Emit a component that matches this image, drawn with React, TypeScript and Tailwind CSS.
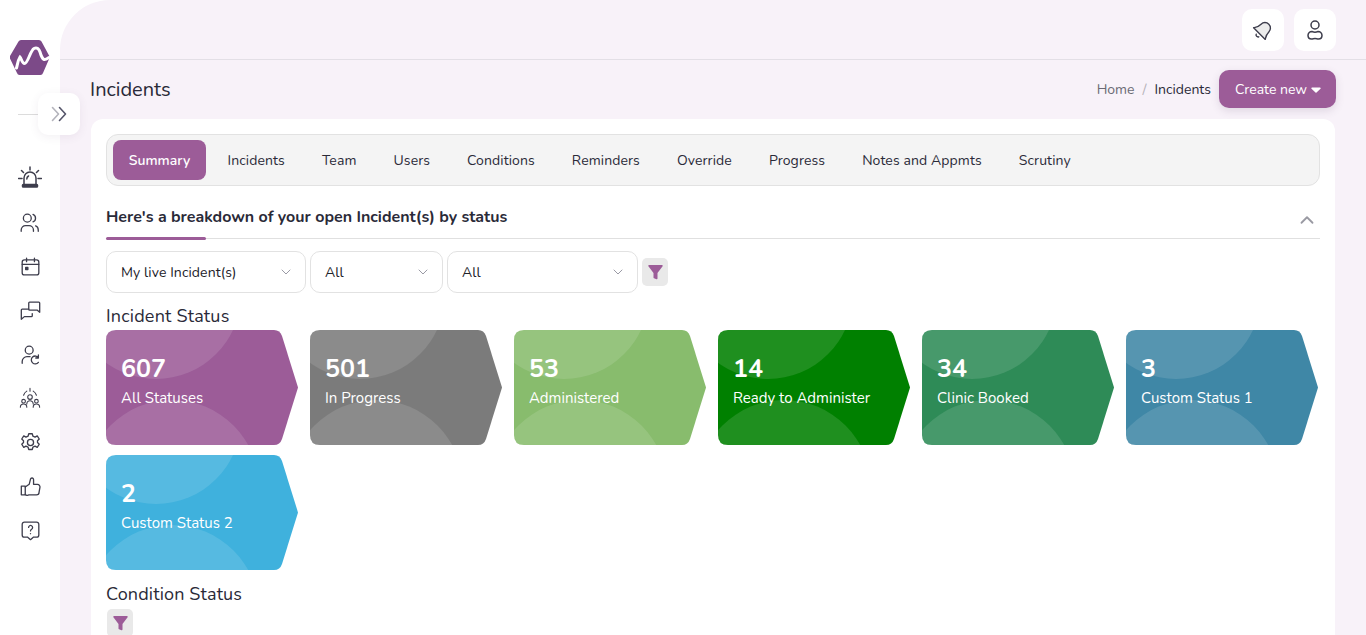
import React from 'react';
import { ChevronDown, ChevronUp } from 'lucide-react';

const tabs = ['Summary', 'Incidents', 'Team', 'Users', 'Conditions', 'Reminders', 'Override', 'Progress', 'Notes and Appmts', 'Scrutiny'];

const statuses = [
  { count: 607, label: 'All Statuses', bg: 'bg-[#9c5c98]' },
  { count: 501, label: 'In Progress', bg: 'bg-[#7b7b7b]' },
  { count: 53, label: 'Administered', bg: 'bg-[#88bc6d]' },
  { count: 14, label: 'Ready to Administer', bg: 'bg-[#008000]' },
  { count: 34, label: 'Clinic Booked', bg: 'bg-[#2e8b57]' },
  { count: 3, label: 'Custom Status 1', bg: 'bg-[#3f87a6]' },
  { count: 2, label: 'Custom Status 2', bg: 'bg-[#3fb1dd]' },
];

function Icon({ children, className = 'w-[21px] h-[21px]' }: { children: React.ReactNode; className?: string }) {
  return (
    <svg viewBox="0 0 24 24" fill="none" stroke="currentColor" strokeWidth="1.5" strokeLinecap="round" strokeLinejoin="round" className={className}>
      {children}
    </svg>
  );
}

const navIcons = [
  // siren
  <Icon key="siren" className="w-[24px] h-[24px]">
    <path d="M6 18v-6a6 6 0 0 1 12 0v6" />
    <rect x="4.500" y="18.500" width="15" height="2.500" rx="0.800" fill="currentColor" />
    <path d="M8.800 13a3.500 3.500 0 0 1 1.700-3M12 1v3M3.500 4.500l2 2M20.500 4.500l-2 2M0.500 12.500h3.500M20 12.500h3.500" />
  </Icon>,
  // people
  <Icon key="people" className="w-[21px] h-[21px] -translate-x-px">
    <circle cx="9.500" cy="7" r="4.500" />
    <path d="M2.500 22v-1.500a5 5 0 0 1 5-5h4a5 5 0 0 1 5 5v1.500" />
    <path d="M16 2.800a4.500 4.500 0 0 1 0 8.400M19 15.800a5 5 0 0 1 3 4.700v1.500" />
  </Icon>,
  // calendar
  <Icon key="calendar">
    <rect x="2.500" y="4.500" width="19" height="17" rx="2.500" />
    <path d="M2.500 9.500h19M7.500 2.500v4M16.500 2.500v4" />
    <rect x="6.500" y="13" width="2.500" height="2.500" fill="currentColor" />
  </Icon>,
  // chat
  <Icon key="chat">
    <path d="M10 3.500a1 1 0 0 1 1-1h10.500a1 1 0 0 1 1 1v10.500l-3-2.500h-8.500a1 1 0 0 1-1-1z" />
    <path d="M10 10.500h-7.500a1 1 0 0 0-1 1v10.500l3.500-3h8a1 1 0 0 0 1-1v-2.500" />
  </Icon>,
  // person with arrow
  <Icon key="person">
    <circle cx="10.500" cy="7" r="4.500" />
    <path d="M2.500 22v-2a5.500 5.500 0 0 1 5.500-5.500h3.500" />
    <path d="M21 15.500a4.500 4.500 0 1 0 0 5.500M21 12.500v3.500h-3" />
  </Icon>,
  // team
  <svg key="team" viewBox="0 0 24 24" fill="none" stroke="currentColor" strokeWidth="1.200" strokeLinecap="round" strokeLinejoin="round" className="w-[22px] h-[22px]">
    <circle cx="12" cy="11" r="2.500" />
    <circle cx="5" cy="15.500" r="2" />
    <circle cx="19" cy="15.500" r="2" />
    <path d="M1.500 22a3.500 3.500 0 0 1 7 0M8.500 18.500a3.500 3.500 0 0 1 7 0M15.500 22a3.500 3.500 0 0 1 7 0" />
    <path d="M12 1.500v3M5 9a8 8 0 0 1 3.500-4.500M19 9a8 8 0 0 0-3.500-4.500" />
  </svg>,
  // gear
  <Icon key="gear">
    <circle cx="12" cy="12" r="3.500" />
    <path d="M10 2h4l.8 2.800 2.400 1 2.500-1.400 2.300 3.600-2 2v2l2 2-2.300 3.600-2.500-1.400-2.400 1-.8 2.800h-4l-.8-2.800-2.400-1-2.500 1.400-2.300-3.600 2-2v-2l-2-2 2.300-3.600 2.500 1.400 2.400-1z" />
  </Icon>,
  // thumbs up
  <Icon key="thumb">
    <path d="M1.500 11.500h4.500v10h-4.500z" />
    <path d="M6 12.500l4.500-3 1.500-6a1.800 1.800 0 0 1 3.500 0.500v5.500h4.500a3 3 0 0 1 2.800 3.500l-1 5.500a3 3 0 0 1-3 3h-8.500a3 3 0 0 1-4.300-.5" />
  </Icon>,
  // question bubble
  <Icon key="help">
    <path d="M5 2.500h14a2.500 2.500 0 0 1 2.500 2.500v12a2.500 2.500 0 0 1-2.500 2.500h-3.500l-3.500 3-3.500-3h-3.500a2.500 2.500 0 0 1-2.500-2.500v-12a2.500 2.500 0 0 1 2.500-2.500z" />
    <path d="M9.800 8.500a2.300 2.300 0 1 1 3.500 2c-.8.500-1.300 1-1.300 2M12 15.500v.1" />
  </Icon>,
];

function FilterButton() {
  return (
    <button className="w-[26px] h-[28px] rounded-[5px] bg-[#e9e9e9] flex items-center justify-center">
      <svg viewBox="0 0 16 16" className="w-[16px] h-[16px] text-[#9c5c98]" fill="currentColor">
        <path d="M1 1h14a.8.8 0 0 1 .6 1.300l-5.100 6.700v5.500a.8.8 0 0 1-1 .7l-2.500-1a.8.8 0 0 1-.5-.7v-4.500l-5.100-6.700a.8.8 0 0 1 .6-1.300z" />
      </svg>
    </button>
  );
}

function FilterSelect({ label, width }: { label: string; width: string }) {
  return (
    <div className={`${width} h-[42px] border border-[#e2e2e2] rounded-[10px] bg-white flex items-center justify-between pl-[14px] pr-[11px] text-[14px] tracking-[0.1px] text-[#212129]`}>
      <span>{label}</span>
      <ChevronDown className="w-[16px] h-[16px] text-[#9a9aa5]" strokeWidth={1.500} />
    </div>
  );
}

function StatusCard({ count, label, bg }: { count: number; label: string; bg: string }) {
  return (
    <div className={`relative w-[192px] h-[115px] overflow-hidden text-white ${bg} [clip-path:path('M10_0H168Q174_0_176_6L192_57.500L176_109Q174_115_168_115H10Q0_115_0_105V10Q0_0_10_0Z')]`}>
      <div className="absolute left-[-35px] top-[-121px] w-[170px] h-[170px] rounded-full bg-white/[0.12]" />
      <div className="absolute left-[-21px] top-[70px] w-[174px] h-[174px] rounded-full bg-white/[0.12]" />
      <div className="relative pl-[15px] pt-[22px]">
        <div className="text-[25px] leading-[34px] font-bold">{count}</div>
        <div className="text-[15px] leading-[20px] mt-[2px]">{label}</div>
      </div>
    </div>
  );
}

export default function App() {
  return (
    <div className="font-['Nunito','Lato','Noto_Sans',sans-serif] flex h-[635px] w-[1366px] overflow-hidden bg-white text-[#2a2a38]">
      {/* 侧边栏 */}
      <aside className="relative z-10 w-[60px] shrink-0 pt-[40px] flex flex-col items-center text-[#3d3d4c]">
        <svg viewBox="0 0 40 35" className="w-[40px] h-[35px]">
          <path d="M11 0h18a3 3 0 0 1 2.500 1.500l7.800 14.500a3 3 0 0 1 0 2.500l-6.300 14.500a3 3 0 0 1-2.500 2h-21a3 3 0 0 1-2.500-2l-7-14.500a3 3 0 0 1 0-2.500l8.500-14.500a3 3 0 0 1 2.500-1.500z" fill="#7c4a88" />
          <path d="M6.500 28c1-3.500 1.500-8 3.500-11 1.500 1.500 2 6.500 4.500 6.500 3.500 0 5.500-12.500 9.500-15 3-1.500 5 .5 6 3.500 1 3.500 2 6.500 4 7.500 1.500.5 3.500-1 5-2" fill="none" stroke="#fff" strokeWidth="3" strokeLinecap="round" />
        </svg>
        <div className="w-[20px] h-px bg-[#dcdcdc] mt-[39px] self-start ml-[18px]" />
        <nav className="mt-[41px] flex flex-col items-center">
          {navIcons.map((icon, i) => (
            <div key={i} className="h-[44px] flex items-center justify-center">{icon}</div>
          ))}
        </nav>
        <button className="absolute left-[38px] top-[93px] w-[42px] h-[42px] rounded-[10px] bg-white shadow-[0_2px_10px_rgba(90,60,100,0.08)] flex items-center justify-center">
          <svg viewBox="0 0 16 16" className="w-[16px] h-[16px]" fill="none" strokeWidth="1.600" strokeLinecap="round" strokeLinejoin="round">
            <path d="M1.500 1.500l6 6.500-6 6.500" stroke="#b4b4bc" />
            <path d="M8.500 1.500l6 6.500-6 6.500" stroke="#55556a" />
          </svg>
        </button>
      </aside>

      <main className="flex-1 min-w-0 rounded-tl-[50px] bg-[#f8f2f9] overflow-hidden">
        {/* 顶栏 */}
        <header className="h-[60px] border-b border-[#e3dfe6] flex items-center justify-end gap-[10px] pr-[30px]">
          <button className="w-[42px] h-[42px] rounded-[10px] bg-white flex items-center justify-center">
            <Icon className="w-[22px] h-[22px] rotate-45 text-[#3d3d4c]">
              <path d="M6 9a6 6 0 0 1 12 0c0 5 2 7 3 8.500h-18c1-1.500 3-3.500 3-8.500z" fill="#ececec" />
              <path d="M10 20.500a2.200 2.200 0 0 0 4 0" />
            </Icon>
          </button>
          <button className="w-[42px] h-[42px] rounded-[10px] bg-white flex items-center justify-center">
            <Icon className="w-[24px] h-[24px] text-[#3d3d4c]">
              <circle cx="12" cy="7" r="4" />
              <path d="M9 13.500c1.500.700 4.500.700 6 0a3.800 3.800 0 0 1 4 3.700c0 2.300-1.500 3.800-3.500 3.800-1.500 0-2-.500-3.500-.500s-2 .500-3.500.500c-2 0-3.500-1.500-3.500-3.800a3.800 3.800 0 0 1 4-3.700z" />
            </Icon>
          </button>
        </header>

        {/* 标题行 */}
        <div className="h-[59px] pl-[30px] pr-[30px] flex items-center justify-between">
          <h1 className="text-[20px] text-[#2a2a38]">Incidents</h1>
          <div className="flex items-center text-[14px]">
            <span className="text-[#6a6a74]">Home</span>
            <span className="mx-[8px] text-[#b5b1b8]">/</span>
            <span className="text-[#2a2a38]">Incidents</span>
            <button className="ml-[8px] mb-px w-[117px] h-[38px] rounded-[10px] bg-[#9c5c98] text-white flex items-center justify-center gap-[4px] pl-px shadow-[0_3px_8px_rgba(90,60,100,0.15)]">
              Create new
              <svg viewBox="0 0 10 6" className="w-[10px] h-[6px] mt-[2px]" fill="currentColor"><path d="M1 0.500h8a.7.7 0 0 1 .5 1.200l-4 3.800a.7.7 0 0 1-1 0l-4-3.800a.7.7 0 0 1 .5-1.200z" /></svg>
            </button>
          </div>
        </div>

        {/* 内容卡片 */}
        <section className="ml-[31px] w-[1244px] rounded-t-[12px] bg-white p-[15px]">
          <div className="h-[52px] rounded-[12px] border border-[#e2e2e2] bg-[#f4f4f4] flex items-center gap-[5px] pl-[6px]">
            {tabs.map((tab, i) => (
              <button
                key={tab}
                className={`h-[40px] rounded-[8px] text-[14px] ${i === 0 ? 'w-[93px] mr-[0.5px] bg-[#9c5c98] text-white font-semibold' : 'px-[16px] tracking-[0.1px] text-[#2a2a38]'}`}
              >
                {tab}
              </button>
            ))}
          </div>

          <div className="relative h-[53px] border-b border-[#e0e0e0] flex items-center justify-between">
            <h2 className="text-[16px] font-bold text-[#2a2a38] mt-[10px] mb-0">Here's a breakdown of your open Incident(s) by status</h2>
            <ChevronUp className="w-[22px] h-[22px] mr-[2px] mt-[15px] text-[#9a9aa3]" strokeWidth={2} />
            <div className="absolute left-0 bottom-[-2px] w-[100px] h-[3px] bg-[#9c5c98] rounded-full" />
          </div>

          <div className="mt-[12px] flex items-center gap-[4px]">
            <FilterSelect label="My live Incident(s)" width="w-[200px]" />
            <FilterSelect label="All" width="w-[133px]" />
            <FilterSelect label="All" width="w-[191px]" />
            <FilterButton />
          </div>

          <h3 className="mt-[11px] mb-[2px] text-[18px] leading-[24px] tracking-[0.2px] text-[#2a2a38]">Incident Status</h3>
          <div className="flex flex-wrap gap-x-[12px] gap-y-[10px] w-[1214px]">
            {statuses.map((s) => (
              <StatusCard key={s.label} {...s} />
            ))}
          </div>

          <h3 className="mt-[12px] text-[18px] leading-[24px] tracking-[0.15px] text-[#2a2a38]">Condition Status</h3>
          <div className="mt-[3px] ml-[1px]">
            <FilterButton />
          </div>
        </section>
      </main>
    </div>
  );
}
